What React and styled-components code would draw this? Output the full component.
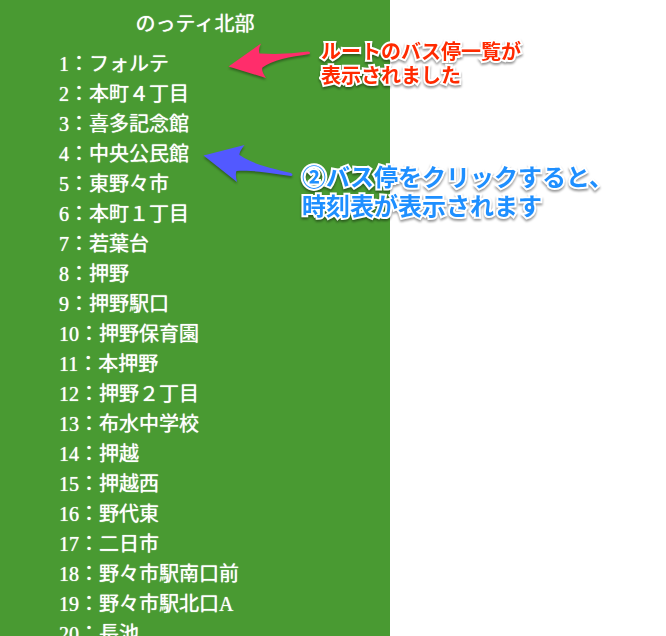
import React from "react";
import styled, { createGlobalStyle } from "styled-components";

const GlobalStyle = createGlobalStyle`
  * { box-sizing: border-box; }
  body { margin: 0; background: #fff; }
`;

const Page = styled.div`
  position: relative;
  display: flex;
  height: 100vh;
  overflow: hidden;
`;

const RoutePanel = styled.main`
  display: flex;
  flex-direction: column;
  flex: 0 1 390px;
  gap: 10px;
  padding-top: 9px;
  background: #499a32;
  color: #fff;
  font-family: "Liberation Serif", "Noto Sans CJK JP", serif;
  font-size: 20px;
  line-height: 30px;
  text-shadow: 0 0 1px #fff;
`;

const RouteTitle = styled.h1`
  margin: 0;
  font-size: 20px;
  font-weight: 400;
  text-align: center;
`;

const StopList = styled.ul`
  display: flex;
  flex-direction: column;
  margin: 0;
  padding: 0 0 0 59px;
  list-style: none;
`;

const StopLink = styled.a`
  color: inherit;
  text-decoration: none;
  white-space: nowrap;
`;

const Note = styled.p`
  position: absolute;
  margin: 0;
  font-family: "Noto Sans CJK JP", sans-serif;
  font-weight: 700;
  white-space: nowrap;
  -webkit-text-stroke: 4px #fff;
  paint-order: stroke fill;
  filter: drop-shadow(0 2px 1px rgba(0, 0, 0, 0.4));
`;

const RouteNote = styled(Note)`
  left: 321px;
  top: 39px;
  color: #ff2a00;
  font-size: 20px;
  line-height: 24px;
`;

const TimetableNote = styled(Note)`
  left: 302px;
  top: 161px;
  color: #1e8fff;
  font-size: 24px;
  line-height: 29px;
`;

const Arrows = styled.svg`
  position: absolute;
  left: 190px;
  top: 30px;
  filter: drop-shadow(0 2px 1px rgba(0, 0, 0, 0.35));
`;

const stops = [
  "フォルテ", "本町４丁目", "喜多記念館", "中央公民館", "東野々市",
  "本町１丁目", "若葉台", "押野", "押野駅口", "押野保育園", "本押野",
  "押野２丁目", "布水中学校", "押越", "押越西", "野代東", "二日市",
  "野々市駅南口前", "野々市駅北口A", "長池",
];

export default function App() {
  return (
    <Page>
      <GlobalStyle />
      <RoutePanel>
        <RouteTitle>のっティ北部</RouteTitle>
        <StopList>
          {stops.map((name, i) => (
            <li key={name}>
              <StopLink href={`#stop-${i + 1}`}>{i + 1}：{name}</StopLink>
            </li>
          ))}
        </StopList>
      </RoutePanel>
      <Arrows width="130" height="170" viewBox="190 30 130 170" aria-hidden="true">
        <path fill="#ff2d6b" d="M228.500 66.500 L261 43.500 Q258 49 259.500 53.500 Q285 55 308 51.500 Q311 52 309.500 54 C290 57 272 60 262.500 67.500 Q261 71 266 78 Z" />
        <path fill="#5259ff" d="M203.500 155.500 L244.500 145 Q239 152 239.500 155 C254 165 272 168 291 173 Q294 175 291 176 C270 173 251 170 236.500 171 Q235 174 237 182 Z" />
      </Arrows>
      <RouteNote>
        ルートのバス停一覧が<br />表示されました
      </RouteNote>
      <TimetableNote>
        ②バス停をクリックすると、<br />時刻表が表示されます
      </TimetableNote>
    </Page>
  );
}
